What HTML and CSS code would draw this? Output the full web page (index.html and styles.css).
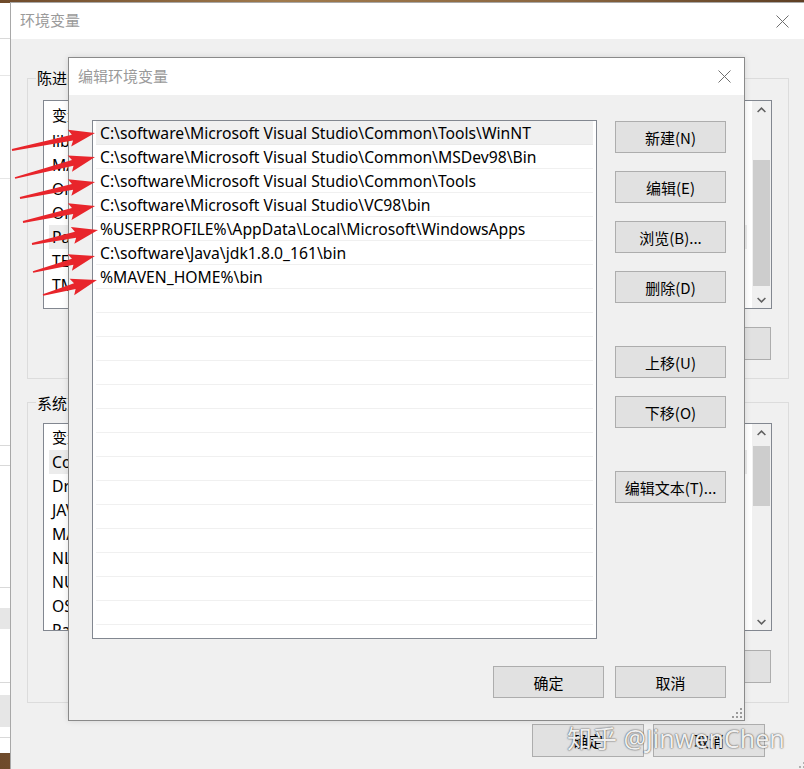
FILE: index.html
```html
<!DOCTYPE html>
<html lang="zh">
<head>
<meta charset="utf-8">
<title>编辑环境变量</title>
<link rel="stylesheet" href="styles.css">
</head>
<body>
<div class="screen">
  <div class="side">
    <div class="seg s1"></div>
    <div class="seg s2"></div>
    <div class="seg s3"></div>
    <div class="seg s4"></div>
    <div class="seg s5"></div>
    <div class="seg s6"></div>
    <div class="seg s7"></div>
    <div class="seg s8"></div>
    <div class="seg s9"></div>
    <div class="seg s10"></div>
    <div class="seg s11"></div>
    <div class="seg s12"></div>
  </div>

  <section class="win bgwin">
    <header class="titlebar">
      <span class="title">环境变量</span>
      <span class="close"><svg width="13" height="13" viewBox="0 0 13 13"><path d="M0.5 0.5L12.5 12.5M12.5 0.5L0.5 12.5" stroke="#6f6f6f" stroke-width="1" fill="none"/></svg></span>
    </header>
    <div class="bgbody">
      <div class="group g1">
        <span class="legend">陈进的用户变量(U)</span>
        <div class="lbox lb1">
          <div class="lcontent">
            <div class="lhead h1">变量</div>
            <div class="li">lib</div>
            <div class="li">MAVEN_HOME</div>
            <div class="li">OneDrive</div>
            <div class="li">OneDriveConsumer</div>
            <div class="li sel">Path</div>
            <div class="li">TEMP</div>
            <div class="li">TMP</div>
          </div>
          <div class="vscroll">
            <span class="sbtn"><svg width="9" height="6" viewBox="0 0 9 6"><path d="M0.6 5L4.5 1.1L8.4 5" fill="none" stroke="#606060" stroke-width="1.5"/></svg></span>
            <span class="track"><span class="thumb t1"></span></span>
            <span class="sbtn"><svg width="9" height="6" viewBox="0 0 9 6"><path d="M0.6 1L4.5 4.9L8.4 1" fill="none" stroke="#606060" stroke-width="1.5"/></svg></span>
          </div>
        </div>
        <div class="grow"><button class="btn">删除(D)</button></div>
      </div>

      <div class="group g2">
        <span class="legend">系统变量(S)</span>
        <div class="lbox lb2">
          <div class="lcontent">
            <div class="lhead h2">变量</div>
            <div class="li sel">ComSpec</div>
            <div class="li">DriverData</div>
            <div class="li">JAVA_HOME</div>
            <div class="li">MAVEN_HOME</div>
            <div class="li">NLS_LANG</div>
            <div class="li">NUMBER_OF_PROCESSORS</div>
            <div class="li">OS</div>
            <div class="li">Path</div>
          </div>
          <div class="vscroll">
            <span class="sbtn"><svg width="9" height="6" viewBox="0 0 9 6"><path d="M0.6 5L4.5 1.1L8.4 5" fill="none" stroke="#606060" stroke-width="1.5"/></svg></span>
            <span class="track"><span class="thumb t2"></span></span>
            <span class="sbtn"><svg width="9" height="6" viewBox="0 0 9 6"><path d="M0.6 1L4.5 4.9L8.4 1" fill="none" stroke="#606060" stroke-width="1.5"/></svg></span>
          </div>
        </div>
        <div class="grow"><button class="btn">删除(L)</button></div>
      </div>

      <div class="bgfoot">
        <button class="btn">确定</button>
        <button class="btn">取消</button>
      </div>
    </div>
    <span class="grip bggrip"><svg width="10" height="10" viewBox="0 0 10 10"><g fill="#b0b0b0"><rect x="8" y="0" width="2" height="2"/><rect x="4" y="4" width="2" height="2"/><rect x="8" y="4" width="2" height="2"/><rect x="0" y="8" width="2" height="2"/><rect x="4" y="8" width="2" height="2"/><rect x="8" y="8" width="2" height="2"/></g></svg></span>
  </section>

  <section class="win dlg">
    <header class="titlebar dtitle">
      <span class="title">编辑环境变量</span>
      <span class="close dclose"><svg width="13" height="13" viewBox="0 0 13 13"><path d="M0.5 0.5L12.5 12.5M12.5 0.5L0.5 12.5" stroke="#6f6f6f" stroke-width="1" fill="none"/></svg></span>
    </header>
    <div class="dbody">
      <div class="plist">
        <div class="prow sel">C:\software\Microsoft Visual Studio\Common\Tools\WinNT</div>
        <div class="prow">C:\software\Microsoft Visual Studio\Common\MSDev98\Bin</div>
        <div class="prow">C:\software\Microsoft Visual Studio\Common\Tools</div>
        <div class="prow">C:\software\Microsoft Visual Studio\VC98\bin</div>
        <div class="prow">%USERPROFILE%\AppData\Local\Microsoft\WindowsApps</div>
        <div class="prow">C:\software\Java\jdk1.8.0_161\bin</div>
        <div class="prow">%MAVEN_HOME%\bin</div>
        <div class="prow"></div>
        <div class="prow"></div>
        <div class="prow"></div>
        <div class="prow"></div>
        <div class="prow"></div>
        <div class="prow"></div>
        <div class="prow"></div>
        <div class="prow"></div>
        <div class="prow"></div>
        <div class="prow"></div>
        <div class="prow"></div>
        <div class="prow"></div>
        <div class="prow"></div>
        <div class="prow"></div>
        <div class="prow"></div>
      </div>
      <div class="pbtns">
        <button class="pbtn first">新建(N)</button>
        <button class="pbtn">编辑(E)</button>
        <button class="pbtn">浏览(B)...</button>
        <button class="pbtn">删除(D)</button>
        <button class="pbtn wide">上移(U)</button>
        <button class="pbtn">下移(O)</button>
        <button class="pbtn wide">编辑文本(T)...</button>
      </div>
    </div>
    <div class="dfoot">
      <button class="pbtn">确定</button>
      <button class="pbtn">取消</button>
    </div>
    <span class="grip dgrip"><svg width="10" height="10" viewBox="0 0 10 10"><g fill="#9a9a9a"><rect x="8" y="0" width="2" height="2"/><rect x="4" y="4" width="2" height="2"/><rect x="8" y="4" width="2" height="2"/><rect x="0" y="8" width="2" height="2"/><rect x="4" y="8" width="2" height="2"/><rect x="8" y="8" width="2" height="2"/></g></svg></span>
  </section>

  <svg class="arrows" width="804" height="769" viewBox="0 0 804 769">
    <g fill="#e8252b">
      <path transform="translate(12 150) rotate(-11.6)" d="M0 -0.9L61.7 -3L58.7 -8.5L84.7 0L58.7 8.5L61.7 3L0 0.9Z"/>
      <path transform="translate(15 178) rotate(-14.7)" d="M0 -0.9L59.7 -3L56.7 -8.5L82.7 0L56.7 8.5L59.7 3L0 0.9Z"/>
      <path transform="translate(20 198) rotate(-12)" d="M0 -0.9L53.7 -3L50.7 -8.5L76.7 0L50.7 8.5L53.7 3L0 0.9Z"/>
      <path transform="translate(23 222) rotate(-12.5)" d="M0 -0.9L50.8 -3L47.8 -8.5L73.8 0L47.8 8.5L50.8 3L0 0.9Z"/>
      <path transform="translate(32 244) rotate(-12)" d="M0 -0.9L44.5 -3L41.5 -8.5L67.5 0L41.5 8.5L44.5 3L0 0.9Z"/>
      <path transform="translate(33 272) rotate(-14.5)" d="M0 -0.9L41 -3L38 -8.5L64 0L38 8.5L41 3L0 0.9Z"/>
      <path transform="translate(43 295) rotate(-15.5)" d="M0 -0.9L33 -3L30 -8.5L56 0L30 8.5L33 3L0 0.9Z"/>
    </g>
  </svg>

  <div class="watermark">知乎 @JinwenChen</div>
</div>
</body>
</html>
```

FILE: styles.css
```css
* { box-sizing: border-box; }
html, body { margin: 0; padding: 0; }
body {
  width: 804px;
  height: 769px;
  overflow: hidden;
  background: linear-gradient(90deg, #6e4a2b 0%, #a07a4c 35%, #8a6640 70%, #5e3f24 100%);
  font-family: "Noto Sans", "Noto Sans CJK SC", sans-serif;
  color: #000;
}
.screen { position: relative; width: 804px; height: 769px; overflow: hidden; }

/* strip of another window at the far left */
.side {
  position: absolute; left: 0; top: 3px; width: 11px; height: 750px;
  background: #fff; display: flex; flex-direction: column;
}
.seg { flex: none; border-bottom: 1px solid #d9d9d9; }
.s1 { height: 36px; }
.s2 { height: 37px; border-color: #e6e6e6; }
.s3 { height: 103px; border-color: #e6e6e6; }
.s4 { height: 267px; }
.s5 { height: 20px; }
.s6 { height: 122px; }
.s7 { height: 20px; border: none; }
.s8 { height: 21px; background: #e6e6e6; border: none; }
.s9 { height: 54px; }
.s10 { height: 12px; border: none; }
.s11 { height: 32px; background: #e6e6e6; border: none; }
.s12 { height: 11px; }

.win { position: absolute; background: #f0f0f0; }

.titlebar {
  display: flex; align-items: center; justify-content: space-between;
  background: #fff; padding-left: 9px;
}
.title { font-family: "Noto Sans CJK SC", sans-serif; font-size: 15px; color: #9a9a9a; }
.close { width: 46px; height: 100%; display: flex; align-items: center; justify-content: center; }

/* background window */
.bgwin {
  left: 10px; top: 2px; width: 796px; height: 790px;
  border: 1px solid #a8a8a8;
}
.bgwin .titlebar { height: 36px; }
.bgwin .title { margin-bottom: 3px; }
.bgbody { padding: 39px 16px 0 16px; }
.group { position: relative; border: 1px solid #dcdcdc; }
.g1 { padding: 21px 16px 18px 15px; }
.g2 { margin-top: 23px; padding: 20px 16px 19px 15px; }
.legend {
  position: absolute; left: 8px; top: -11px;
  background: #f0f0f0; padding: 0 1px;
  font-family: "Noto Sans CJK SC", sans-serif; font-size: 15px; line-height: 20px;
}
.g2 .legend { top: -10px; }
.lbox { display: flex; border: 1px solid #828790; background: #fff; }
.lb1 { height: 209px; }
.lb2 { height: 208px; }
.lcontent { flex: 1; padding: 0 5px; overflow: hidden; }
.lhead { padding-left: 3px; font-size: 15px; font-family: "Noto Sans CJK SC", sans-serif; }
.h1 { height: 28px; line-height: 28px; }
.h2 { height: 26px; line-height: 26px; }
.li { height: 24px; line-height: 24px; padding-left: 3px; font-size: 15.7px; white-space: nowrap; }
.li.sel { background: #ececec; }
.vscroll { width: 19px; background: #f0f0f0; display: flex; flex-direction: column; }
.sbtn { height: 17px; display: flex; align-items: center; justify-content: center; flex: none; }
.track { flex: 1; display: flex; flex-direction: column; }
.thumb { background: #cdcdcd; margin: 0 1px; flex: none; }
.t1 { margin-top: 42px; height: 126px; }
.t2 { margin-top: 5px; height: 60px; }
.grow { display: flex; justify-content: flex-end; padding-right: 1px; }
.g1 .grow { margin-top: 18px; }
.g2 .grow { margin-top: 19px; }
.btn {
  width: 111px; height: 33px;
  border: 1px solid #adadad; background: #e1e1e1;
  font-family: "Noto Sans CJK SC", sans-serif; font-size: 15px; color: #000;
  padding: 0;
}
.bgfoot { display: flex; justify-content: flex-end; gap: 9px; margin-top: 21px; padding-right: 24px; }
.bgfoot .btn { width: 112px; }
.grip { position: absolute; right: 3px; bottom: 3px; width: 10px; height: 10px; display: block; line-height: 0; }
.bggrip { right: auto; left: 784px; top: 759px; bottom: auto; }

/* front dialog */
.dlg {
  left: 68px; top: 57px; width: 677px; height: 664px;
  border: 1px solid #8a8a8a;
  box-shadow: 0 0 6px rgba(0, 0, 0, 0.12);
}
.dtitle { height: 37px; }
.dtitle .title { margin-bottom: 2px; }
.dclose { width: 40px; }
.dbody {
  display: grid; grid-template-columns: 505px 111px; column-gap: 18px;
  padding: 25px 18px 0 23px;
}
.plist {
  height: 519px; border: 1px solid #828790; background: #fff;
  padding: 0 3px; overflow: hidden;
}
.prow {
  height: 24px; line-height: 25px; border-bottom: 1px solid #f0f0f0;
  padding-left: 4px; font-size: 15.7px; white-space: nowrap; overflow: hidden;
}
.prow.sel { background: #f0f0f0; border-bottom-color: #e9e9e9; }
.pbtns { display: flex; flex-direction: column; }
.pbtn {
  width: 111px; height: 32px; margin-top: 18px;
  border: 1px solid #adadad; background: #e1e1e1;
  font-family: "Noto Sans CJK SC", sans-serif; font-size: 15px; color: #000;
  padding: 0;
}
.pbtn.first { margin-top: 1px; }
.pbtn.wide { margin-top: 43px; }
.dfoot { display: flex; justify-content: flex-end; gap: 11px; padding: 27px 18px 0 0; }
.dfoot .pbtn { margin-top: 0; }
.dgrip { right: 2px; bottom: 2px; }

.arrows { position: absolute; left: 0; top: 0; pointer-events: none; }

.watermark {
  position: absolute; left: 567px; top: 720px;
  font-family: "Noto Sans", "Noto Sans CJK SC", sans-serif;
  font-size: 25px; line-height: 36px; color: rgba(255, 255, 255, 0.92);
  white-space: nowrap;
  text-shadow: 0 0 1px #555, 0 0 2px rgba(0, 0, 0, 0.55);
}
```
